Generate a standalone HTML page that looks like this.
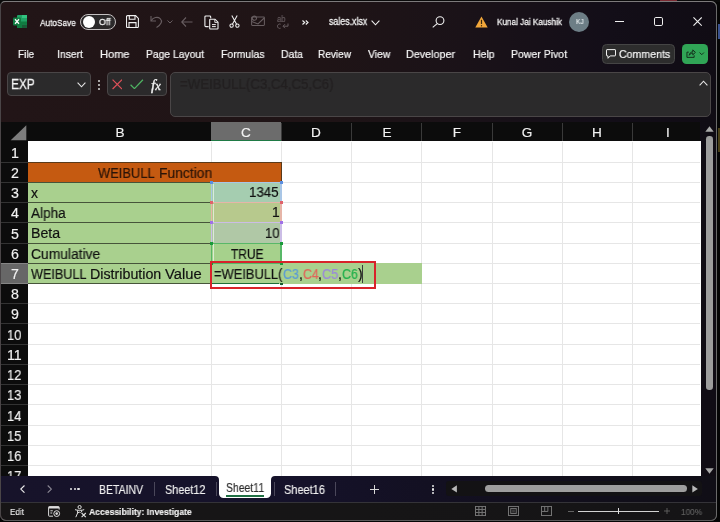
<!DOCTYPE html>
<html lang="en">
<head>
<meta charset="utf-8">
<title>sales.xlsx - Excel</title>
<style>
*{box-sizing:border-box;margin:0;padding:0}
html,body{width:720px;height:522px;overflow:hidden;background:#050505}
body{font-family:"Liberation Sans",sans-serif;color:#fff;position:relative}
.abs,.t{position:absolute}
.t{white-space:nowrap;line-height:1;transform-origin:0 50%;will-change:transform;-webkit-text-stroke-width:0.15px}
#win{position:absolute;left:0;top:1px;width:717.2px;height:519.6px;border-radius:5px 6px 6px 6px;overflow:hidden;
 background:linear-gradient(90deg,#221517 0%,#1f1416 45%,#1a1218 65%,#130e18 85%,#100c14 100%);border:1px solid #555}
.box{position:absolute;background:#2b2a2b;border:1px solid #4a4647;border-radius:4px}
</style>
</head>
<body>

<div class="abs" style="left:0;top:0;width:720px;height:2px;background:#0a0a0a"></div>
<div class="abs" style="left:660px;top:0;width:17px;height:1.3px;background:#7a2a32"></div>
<div class="abs" style="left:718px;top:24px;width:2px;height:15px;background:#3a5290"></div>
<div class="abs" style="left:718px;top:128px;width:2px;height:24px;background:#4a4018"></div>
<div id="win"></div>

<svg class="abs" style="left:13px;top:15px" width="14" height="13" viewBox="0 0 28 26">
  <rect x="8" y="0" width="20" height="26" rx="2" fill="#21a366"/>
  <rect x="18" y="0" width="10" height="6.5" fill="#33c481"/>
  <rect x="18" y="6.5" width="10" height="6.5" fill="#21a366"/>
  <rect x="18" y="13" width="10" height="6.5" fill="#107c41"/>
  <rect x="18" y="19.5" width="10" height="6.5" fill="#185c37"/>
  <rect x="8" y="13" width="10" height="13" fill="#107c41"/>
  <rect x="0" y="5" width="16" height="16" rx="2" fill="#107c41"/>
  <path d="M4 8.5 L12 17.5 M12 8.5 L4 17.5" stroke="#fff" stroke-width="2.4"/>
</svg>
<div class="t" style="left:39.50px;top:17.70px;font-size:9.40px;color:#f4f4f4;-webkit-text-stroke-width:0.28px;transform:scaleX(0.8806);">AutoSave</div>
<div class="abs" style="left:80.2px;top:13.7px;width:36px;height:16.4px;border:1.2px solid #c4c0c1;border-radius:8.2px;background:#2b292a"></div>
<div class="abs" style="left:82.8px;top:15.8px;width:12.2px;height:12.2px;border-radius:6.1px;background:#fff"></div>
<div class="t" style="left:99.00px;top:17.70px;font-size:9.20px;color:#f4f4f4;-webkit-text-stroke-width:0.28px;transform:scaleX(0.9509);">Off</div>
<svg class="abs" style="left:126px;top:15px" width="13" height="13" viewBox="0 0 13 13" fill="none" stroke="#f0f0f0" stroke-width="1.1">
  <path d="M1.5 0.6 H9.6 L12.4 3.4 V11.5 a1 1 0 0 1 -1 1 H1.5 a1 1 0 0 1 -1 -1 V1.6 a1 1 0 0 1 1 -1 Z"/>
  <path d="M3.3 0.8 V4.3 H9 V0.8"/>
  <path d="M3 12.3 V7.6 H10 V12.3"/>
</svg>
<!-- undo (dim) -->
<svg class="abs" style="left:150px;top:15px" width="13" height="13" viewBox="0 0 13 13" fill="none" stroke="#675d60" stroke-width="1.1">
  <path d="M1 1 V6 H6"/>
  <path d="M1.2 5.8 C3 2.5 7.5 1.2 10.2 3.6 C12.8 6 11.5 9.5 6.5 12.5"/>
</svg>
<svg class="abs" style="left:167px;top:20px" width="6" height="4" viewBox="0 0 6 4" fill="none" stroke="#675d60" stroke-width="1"><path d="M0.5 0.5 L3 3 L5.5 0.5"/></svg>
<!-- left arrow dim -->
<svg class="abs" style="left:181px;top:17px" width="12" height="10" viewBox="0 0 12 10" fill="none" stroke="#675d60" stroke-width="1.1"><path d="M5 0.5 L0.7 5 L5 9.5 M0.7 5 H11.5"/></svg>
<!-- paste -->
<svg class="abs" style="left:204px;top:14.5px" width="15" height="15" viewBox="0 0 15 15" fill="none" stroke="#f0f0f0" stroke-width="1.1">
  <path d="M4.6 11.6 H1.8 a0.9 0.9 0 0 1 -0.9 -0.9 V1.9 a0.9 0.9 0 0 1 0.9 -0.9 H5.8 a0.9 0.9 0 0 1 0.9 0.9 V3.2"/>
  <path d="M6.3 4.2 H11 L14 7.2 V13.4 a0.6 0.6 0 0 1 -0.6 0.6 H6.3 a0.6 0.6 0 0 1 -0.6 -0.6 V4.8 a0.6 0.6 0 0 1 0.6 -0.6 Z" fill="#1f1416"/>
  <path d="M10.8 4.4 V7.4 H13.8" stroke-width="0.9"/>
  <path d="M8 9.6 H11.8 M8 11.6 H11.8" stroke-width="1"/>
</svg>
<!-- scissors -->
<svg class="abs" style="left:228.5px;top:15px" width="11" height="13" viewBox="0 0 11 13" fill="none" stroke="#f0f0f0" stroke-width="1.05">
  <path d="M2.8 0.5 L7.6 9.3 M8.2 0.5 L3.4 9.3"/>
  <circle cx="2.6" cy="10.6" r="1.7"/><circle cx="8.4" cy="10.6" r="1.7"/>
</svg>
<!-- mail dim -->
<svg class="abs" style="left:251px;top:15px" width="14" height="11" viewBox="0 0 14 11" fill="none" stroke="#675d60" stroke-width="1.05">
  <rect x="0.6" y="2" width="12.8" height="8.4" rx="0.8"/>
  <path d="M0.8 6.5 L7 9 L13.2 3"/>
  <circle cx="3.4" cy="3.2" r="2.1"/>
</svg>
<!-- abc dim -->
<div class="t" style="left:276.70px;top:14.70px;font-size:8.60px;color:#675d60;transform:scaleX(0.8993);">ab</div>
<svg class="abs" style="left:277px;top:22.5px" width="12" height="7" viewBox="0 0 12 7" fill="none" stroke="#675d60" stroke-width="1"><path d="M3.6 1.2 A2.2 2.2 0 1 0 3.6 5.2"/><path d="M11 0.5 V3.2 H6.2 M8 1.2 L6 3.2 L8 5.2"/></svg>
<svg class="abs" style="left:302px;top:20.3px" width="7" height="5" viewBox="0 0 7 5" fill="none" stroke="#f0f0f0" stroke-width="1.15"><path d="M0.5 0.5 L2.7 2.5 L0.5 4.5 M3.8 0.5 L6 2.5 L3.8 4.5"/></svg>
<div class="t" style="left:329.00px;top:17.30px;font-size:10.20px;color:#f4f4f4;-webkit-text-stroke-width:0.28px;transform:scaleX(0.8671);">sales.xlsx</div>
<svg class="abs" style="left:371px;top:19.5px" width="9" height="6" viewBox="0 0 9 6" fill="none" stroke="#f0f0f0" stroke-width="1.1"><path d="M0.6 0.7 L4.5 4.8 L8.4 0.7"/></svg>
<!-- search -->
<svg class="abs" style="left:432px;top:16px" width="13" height="12" viewBox="0 0 13 12" fill="none" stroke="#f0f0f0" stroke-width="1.1"><circle cx="8" cy="4.6" r="3.9"/><path d="M5.2 7.6 L0.7 11.4"/></svg>
<!-- warning -->
<svg class="abs" style="left:475px;top:15.5px" width="13" height="12" viewBox="0 0 13 12"><path d="M6.5 0.4 L12.7 11.6 H0.3 Z" fill="#f2a73a"/><path d="M6.5 3.8 V8" stroke="#3a2a10" stroke-width="1.2"/><circle cx="6.5" cy="9.7" r="0.7" fill="#3a2a10"/></svg>
<div class="t" style="left:497.00px;top:17.75px;font-size:9.30px;color:#f4f4f4;-webkit-text-stroke-width:0.28px;transform:scaleX(0.8795);">Kunal Jai Kaushik</div>
<div class="abs" style="left:569px;top:12px;width:20px;height:20px;border-radius:10px;background:#6d7e86"></div>
<div class="t" style="left:575.80px;top:18.40px;font-size:7.80px;color:#e4eaec;transform:scaleX(0.8343);">KJ</div>
<div class="abs" style="left:614.5px;top:21px;width:9px;height:1px;background:#f0f0f0"></div>
<div class="abs" style="left:653.8px;top:17.2px;width:9.2px;height:9px;border:1.1px solid #f0f0f0;border-radius:1.8px"></div>
<svg class="abs" style="left:693px;top:17.4px" width="9.2" height="9.2" viewBox="0 0 10 10" stroke="#f0f0f0" stroke-width="1.2"><path d="M0.5 0.5 L9.5 9.5 M9.5 0.5 L0.5 9.5"/></svg>
<div class="t" style="left:18.00px;top:49.15px;font-size:11.30px;color:#f6f6f6;-webkit-text-stroke-width:0.22px;transform:scaleX(0.8790);">File</div><div class="t" style="left:56.50px;top:49.15px;font-size:11.30px;color:#f6f6f6;-webkit-text-stroke-width:0.22px;transform:scaleX(0.9198);">Insert</div><div class="t" style="left:99.50px;top:49.15px;font-size:11.30px;color:#f6f6f6;-webkit-text-stroke-width:0.22px;transform:scaleX(0.9787);">Home</div><div class="t" style="left:146.00px;top:49.15px;font-size:11.30px;color:#f6f6f6;-webkit-text-stroke-width:0.22px;transform:scaleX(0.9141);">Page Layout</div><div class="t" style="left:221.00px;top:49.15px;font-size:11.30px;color:#f6f6f6;-webkit-text-stroke-width:0.22px;transform:scaleX(0.9237);">Formulas</div><div class="t" style="left:280.50px;top:49.15px;font-size:11.30px;color:#f6f6f6;-webkit-text-stroke-width:0.22px;transform:scaleX(0.9215);">Data</div><div class="t" style="left:318.00px;top:49.15px;font-size:11.30px;color:#f6f6f6;-webkit-text-stroke-width:0.22px;transform:scaleX(0.8908);">Review</div><div class="t" style="left:367.50px;top:49.15px;font-size:11.30px;color:#f6f6f6;-webkit-text-stroke-width:0.22px;transform:scaleX(0.9260);">View</div><div class="t" style="left:406.00px;top:49.15px;font-size:11.30px;color:#f6f6f6;-webkit-text-stroke-width:0.22px;transform:scaleX(0.9515);">Developer</div><div class="t" style="left:472.50px;top:49.15px;font-size:11.30px;color:#f6f6f6;-webkit-text-stroke-width:0.22px;transform:scaleX(0.9254);">Help</div><div class="t" style="left:511.00px;top:49.15px;font-size:11.30px;color:#f6f6f6;-webkit-text-stroke-width:0.22px;transform:scaleX(0.9290);">Power Pivot</div>
<div class="abs" style="left:602px;top:44px;width:73px;height:19.5px;background:#2d2d2d;border:1px solid #454545;border-radius:4.5px"></div>
<svg class="abs" style="left:606px;top:48.5px" width="10" height="10" viewBox="0 0 10 10" fill="none" stroke="#f0f0f0" stroke-width="1"><path d="M1 0.6 H9 a0.5 0.5 0 0 1 .5 .5 V6.4 a0.5 0.5 0 0 1 -.5 .5 H4.2 L2 9.3 V6.9 H1 a0.5 0.5 0 0 1 -.5 -.5 V1.1 a0.5 0.5 0 0 1 .5 -.5 Z"/></svg>
<div class="t" style="left:619.30px;top:48.70px;font-size:11.20px;color:#f6f6f6;-webkit-text-stroke-width:0.22px;transform:scaleX(0.9465);">Comments</div>
<div class="abs" style="left:682px;top:44px;width:25.5px;height:19.5px;background:#30a556;border-radius:4.5px"></div>
<svg class="abs" style="left:685.5px;top:49.3px" width="10" height="9" viewBox="0 0 11 10" fill="none" stroke="#14301c" stroke-width="1.1"><path d="M3 3.5 H1 V9.3 H9 V7"/><path d="M3.5 7 C3.8 4.5 5.5 3.2 7.5 3.2 V1 L10.4 3.8 L7.5 6.5 V4.5 C6 4.5 4.6 5.2 3.5 7 Z"/></svg>
<svg class="abs" style="left:699px;top:52.2px" width="5.5" height="3.6" viewBox="0 0 6 4" fill="none" stroke="#14301c" stroke-width="1.1"><path d="M0.6 0.6 L3 3 L5.4 0.6"/></svg>

<div class="box" style="left:7px;top:72.2px;width:84px;height:23.8px"></div>
<div class="t" style="left:10.60px;top:78.00px;font-size:13.80px;color:#f4f4f4;-webkit-text-stroke-width:0.3px;transform:scaleX(0.8584);">EXP</div>
<svg class="abs" style="left:76.5px;top:81.5px" width="9" height="6" viewBox="0 0 9 6" fill="none" stroke="#e6e6e6" stroke-width="1.1"><path d="M0.6 0.7 L4.5 4.8 L8.4 0.7"/></svg>
<div class="abs" style="left:97.5px;top:79.5px;width:2px;height:2px;border-radius:1px;background:#d8d8d8"></div>
<div class="abs" style="left:97.5px;top:83.5px;width:2px;height:2px;border-radius:1px;background:#d8d8d8"></div>
<div class="abs" style="left:97.5px;top:87.5px;width:2px;height:2px;border-radius:1px;background:#d8d8d8"></div>
<div class="box" style="left:106.5px;top:72.2px;width:60.5px;height:23.8px"></div>
<svg class="abs" style="left:111.8px;top:79px" width="10.6" height="10.6" viewBox="0 0 11 11" stroke="#dd5058" stroke-width="1.25"><path d="M0.6 0.6 L10.4 10.4 M10.4 0.6 L0.6 10.4"/></svg>
<svg class="abs" style="left:130px;top:78.6px" width="13.5" height="10.6" viewBox="0 0 14 11" fill="none" stroke="#4fb463" stroke-width="1.25"><path d="M0.6 6 L4.6 10 L13.4 0.8"/></svg>
<div class="t" style="left:151.20px;top:76.85px;font-size:15.50px;color:#efefef;font-family:'Liberation Serif',serif;font-style:italic;-webkit-text-stroke-width:0.35px;">f<span style="font-size:12.5px">x</span></div>
<div class="box" style="left:170px;top:72px;width:540.6px;height:44.8px;border-radius:5px"></div>
<div class="t" style="left:180.00px;top:77.25px;font-size:14.50px;color:#232021;transform:scaleX(0.9136);">=WEIBULL(C3,C4,C5,C6)</div>
<svg class="abs" style="left:698.5px;top:80.3px" width="9" height="6" viewBox="0 0 9 6" fill="none" stroke="#e6e6e6" stroke-width="1.1"><path d="M0.6 5.3 L4.5 1.2 L8.4 5.3"/></svg>
<div class="abs" style="left:1px;top:141px;width:699.6px;height:334.6px;background:#fff"></div>
<div class="abs" style="left:1px;top:121.8px;width:699.4px;height:19.5px;background:#0c0c0c"></div>
<div class="abs" style="left:1px;top:121.8px;width:27.2px;height:354.2px;background:#0c0c0c"></div>
<svg class="abs" style="left:10px;top:124.5px" width="17" height="16" viewBox="0 0 17 16"><path d="M16.3 0.3 V15.3 H0.7 Z" fill="#7d7d7d"/></svg>
<div class="abs" style="left:210.5px;top:141.7px;width:1px;height:334.3px;background:#e6e6e6"></div>
<div class="abs" style="left:280.8px;top:141.7px;width:1px;height:334.3px;background:#e6e6e6"></div>
<div class="abs" style="left:351.0px;top:141.7px;width:1px;height:334.3px;background:#e6e6e6"></div>
<div class="abs" style="left:421.2px;top:141.7px;width:1px;height:334.3px;background:#e6e6e6"></div>
<div class="abs" style="left:491.5px;top:141.7px;width:1px;height:334.3px;background:#e6e6e6"></div>
<div class="abs" style="left:561.7px;top:141.7px;width:1px;height:334.3px;background:#e6e6e6"></div>
<div class="abs" style="left:631.9px;top:141.7px;width:1px;height:334.3px;background:#e6e6e6"></div>
<div class="abs" style="left:28.2px;top:161.72px;width:672px;height:1px;background:#e6e6e6"></div>
<div class="abs" style="left:28.2px;top:181.94px;width:672px;height:1px;background:#e6e6e6"></div>
<div class="abs" style="left:28.2px;top:202.16px;width:672px;height:1px;background:#e6e6e6"></div>
<div class="abs" style="left:28.2px;top:222.38px;width:672px;height:1px;background:#e6e6e6"></div>
<div class="abs" style="left:28.2px;top:242.60px;width:672px;height:1px;background:#e6e6e6"></div>
<div class="abs" style="left:28.2px;top:262.82px;width:672px;height:1px;background:#e6e6e6"></div>
<div class="abs" style="left:28.2px;top:283.04px;width:672px;height:1px;background:#e6e6e6"></div>
<div class="abs" style="left:28.2px;top:303.26px;width:672px;height:1px;background:#e6e6e6"></div>
<div class="abs" style="left:28.2px;top:323.48px;width:672px;height:1px;background:#e6e6e6"></div>
<div class="abs" style="left:28.2px;top:343.70px;width:672px;height:1px;background:#e6e6e6"></div>
<div class="abs" style="left:28.2px;top:363.92px;width:672px;height:1px;background:#e6e6e6"></div>
<div class="abs" style="left:28.2px;top:384.14px;width:672px;height:1px;background:#e6e6e6"></div>
<div class="abs" style="left:28.2px;top:404.36px;width:672px;height:1px;background:#e6e6e6"></div>
<div class="abs" style="left:28.2px;top:424.58px;width:672px;height:1px;background:#e6e6e6"></div>
<div class="abs" style="left:28.2px;top:444.80px;width:672px;height:1px;background:#e6e6e6"></div>
<div class="abs" style="left:28.2px;top:465.02px;width:672px;height:1px;background:#e6e6e6"></div>
<div class="abs" style="left:210.5px;top:122.5px;width:1px;height:18.5px;background:#3a3a3a"></div>
<div class="t" style="left:109.60px;top:125.50px;font-size:13.60px;color:#f2f2f2;width:20px;text-align:center;">B</div><div class="abs" style="left:211.0px;top:121.8px;width:70.3px;height:19.5px;background:#6c6c6c;border-bottom:1.3px solid #1f7a45"></div>
<div class="abs" style="left:280.8px;top:122.5px;width:1px;height:18.5px;background:#3a3a3a"></div>
<div class="t" style="left:236.15px;top:125.50px;font-size:13.60px;color:#f2f2f2;width:20px;text-align:center;">C</div><div class="abs" style="left:351.0px;top:122.5px;width:1px;height:18.5px;background:#3a3a3a"></div>
<div class="t" style="left:306.40px;top:125.50px;font-size:13.60px;color:#f2f2f2;width:20px;text-align:center;">D</div><div class="abs" style="left:421.2px;top:122.5px;width:1px;height:18.5px;background:#3a3a3a"></div>
<div class="t" style="left:376.60px;top:125.50px;font-size:13.60px;color:#f2f2f2;width:20px;text-align:center;">E</div><div class="abs" style="left:491.5px;top:122.5px;width:1px;height:18.5px;background:#3a3a3a"></div>
<div class="t" style="left:446.85px;top:125.50px;font-size:13.60px;color:#f2f2f2;width:20px;text-align:center;">F</div><div class="abs" style="left:561.7px;top:122.5px;width:1px;height:18.5px;background:#3a3a3a"></div>
<div class="t" style="left:517.10px;top:125.50px;font-size:13.60px;color:#f2f2f2;width:20px;text-align:center;">G</div><div class="abs" style="left:631.9px;top:122.5px;width:1px;height:18.5px;background:#3a3a3a"></div>
<div class="t" style="left:587.30px;top:125.50px;font-size:13.60px;color:#f2f2f2;width:20px;text-align:center;">H</div><div class="t" style="left:657.50px;top:125.50px;font-size:13.60px;color:#f2f2f2;width:20px;text-align:center;">I</div><div class="abs" style="left:1px;top:161.72px;width:27.2px;height:1px;background:#333"></div>
<div class="t" style="left:2.50px;top:145.68px;font-size:14.20px;color:#f2f2f2;width:24px;text-align:center;">1</div><div class="abs" style="left:1px;top:181.94px;width:27.2px;height:1px;background:#333"></div>
<div class="t" style="left:2.50px;top:165.90px;font-size:14.20px;color:#f2f2f2;width:24px;text-align:center;">2</div><div class="abs" style="left:1px;top:202.16px;width:27.2px;height:1px;background:#333"></div>
<div class="t" style="left:2.50px;top:186.12px;font-size:14.20px;color:#f2f2f2;width:24px;text-align:center;">3</div><div class="abs" style="left:1px;top:222.38px;width:27.2px;height:1px;background:#333"></div>
<div class="t" style="left:2.50px;top:206.34px;font-size:14.20px;color:#f2f2f2;width:24px;text-align:center;">4</div><div class="abs" style="left:1px;top:242.60px;width:27.2px;height:1px;background:#333"></div>
<div class="t" style="left:2.50px;top:226.56px;font-size:14.20px;color:#f2f2f2;width:24px;text-align:center;">5</div><div class="t" style="left:2.50px;top:246.78px;font-size:14.20px;color:#f2f2f2;width:24px;text-align:center;">6</div><div class="abs" style="left:1px;top:263.32px;width:27.2px;height:20.22px;background:#676767;border-top:1px solid #858585;border-bottom:1px solid #858585"></div>
<div class="t" style="left:2.50px;top:267.00px;font-size:14.20px;color:#f2f2f2;width:24px;text-align:center;">7</div><div class="abs" style="left:1px;top:303.26px;width:27.2px;height:1px;background:#333"></div>
<div class="t" style="left:2.50px;top:287.22px;font-size:14.20px;color:#f2f2f2;width:24px;text-align:center;">8</div><div class="abs" style="left:1px;top:323.48px;width:27.2px;height:1px;background:#333"></div>
<div class="t" style="left:2.50px;top:307.44px;font-size:14.20px;color:#f2f2f2;width:24px;text-align:center;">9</div><div class="abs" style="left:1px;top:343.70px;width:27.2px;height:1px;background:#333"></div>
<div class="t" style="left:7.30px;top:327.66px;font-size:14.20px;color:#f2f2f2;transform:scaleX(0.9061);">10</div><div class="abs" style="left:1px;top:363.92px;width:27.2px;height:1px;background:#333"></div>
<div class="t" style="left:7.30px;top:347.88px;font-size:14.20px;color:#f2f2f2;transform:scaleX(0.9705);">11</div><div class="abs" style="left:1px;top:384.14px;width:27.2px;height:1px;background:#333"></div>
<div class="t" style="left:7.30px;top:368.10px;font-size:14.20px;color:#f2f2f2;transform:scaleX(0.9061);">12</div><div class="abs" style="left:1px;top:404.36px;width:27.2px;height:1px;background:#333"></div>
<div class="t" style="left:7.30px;top:388.32px;font-size:14.20px;color:#f2f2f2;transform:scaleX(0.9061);">13</div><div class="abs" style="left:1px;top:424.58px;width:27.2px;height:1px;background:#333"></div>
<div class="t" style="left:7.30px;top:408.54px;font-size:14.20px;color:#f2f2f2;transform:scaleX(0.9061);">14</div><div class="abs" style="left:1px;top:444.80px;width:27.2px;height:1px;background:#333"></div>
<div class="t" style="left:7.30px;top:428.76px;font-size:14.20px;color:#f2f2f2;transform:scaleX(0.9061);">15</div><div class="abs" style="left:1px;top:465.02px;width:27.2px;height:1px;background:#333"></div>
<div class="t" style="left:7.30px;top:448.98px;font-size:14.20px;color:#f2f2f2;transform:scaleX(0.9061);">16</div><div class="abs" style="left:1px;top:485.24px;width:27.2px;height:1px;background:#333"></div>
<div class="t" style="left:7.30px;top:469.20px;font-size:14.20px;color:#f2f2f2;transform:scaleX(0.9061);">17</div><div class="abs" style="left:28.2px;top:162.22px;width:253.3px;height:20.22px;background:#c55a11"></div>
<div class="abs" style="left:28.2px;top:182.44px;width:253.3px;height:80.88px;background:#a9d08e"></div>
<div class="abs" style="left:28.2px;top:263.32px;width:393.5px;height:20.22px;background:#a9d08e"></div>
<div class="abs" style="left:28.2px;top:181.94px;width:253.3px;height:1px;background:#46543a"></div>
<div class="abs" style="left:28.2px;top:202.16px;width:182.8px;height:1px;background:#46543a"></div>
<div class="abs" style="left:28.2px;top:222.38px;width:182.8px;height:1px;background:#46543a"></div>
<div class="abs" style="left:28.2px;top:242.60px;width:182.8px;height:1px;background:#46543a"></div>
<div class="abs" style="left:28.2px;top:262.82px;width:182.8px;height:1px;background:#46543a"></div>
<div class="abs" style="left:28.2px;top:283.04px;width:182.8px;height:1px;background:#46543a"></div>
<div class="abs" style="left:28.2px;top:161.72px;width:253.3px;height:1px;background:#5a3a1a"></div>
<div class="abs" style="left:280.9px;top:162.22px;width:1px;height:20.22px;background:#5a3a1a"></div>
<div class="abs" style="left:210.5px;top:182.44px;width:1px;height:101.10px;background:#46543a"></div>
<div class="abs" style="left:211.2px;top:181.84px;width:71.1px;height:20.82px;background:#a5cdb0;border:1.4px solid #a9c6e6;border-left-width:1px;border-right-width:2px;border-bottom-width:0"></div>
<div class="abs" style="left:212.6px;top:183.64px;width:1px;height:18.22px;background:rgba(235,245,235,0.75)"></div>
<div class="abs" style="left:211.2px;top:202.06px;width:71.1px;height:20.82px;background:#b7c98d;border:1.4px solid #e6b5a8;border-left-width:1px;border-right-width:2px;border-bottom-width:0"></div>
<div class="abs" style="left:212.6px;top:203.86px;width:1px;height:18.22px;background:rgba(235,245,235,0.75)"></div>
<div class="abs" style="left:211.2px;top:222.28px;width:71.1px;height:20.82px;background:#b0c8a6;border:1.4px solid #cbbde6;border-left-width:1px;border-right-width:2px;border-bottom-width:0"></div>
<div class="abs" style="left:212.6px;top:224.08px;width:1px;height:18.22px;background:rgba(235,245,235,0.75)"></div>
<div class="abs" style="left:211.2px;top:242.50px;width:71.1px;height:20.82px;background:#a6d18c;border:1.4px solid #58b868;border-left-width:1px;border-right-width:2px;border-bottom-width:0"></div>
<div class="abs" style="left:212.6px;top:244.30px;width:1px;height:18.22px;background:rgba(235,245,235,0.75)"></div>
<div class="abs" style="left:210.2px;top:180.94px;width:3px;height:3px;background:#5b8fe0"></div>
<div class="abs" style="left:279.9px;top:180.94px;width:3px;height:3px;background:#5b8fe0"></div>
<div class="abs" style="left:210.2px;top:201.16px;width:3px;height:3px;background:#e0626a"></div>
<div class="abs" style="left:279.9px;top:201.16px;width:3px;height:3px;background:#e0626a"></div>
<div class="abs" style="left:210.2px;top:221.38px;width:3px;height:3px;background:#a070e8"></div>
<div class="abs" style="left:279.9px;top:221.38px;width:3px;height:3px;background:#a070e8"></div>
<div class="abs" style="left:210.2px;top:241.60px;width:3px;height:3px;background:#1a9a3a"></div>
<div class="abs" style="left:279.9px;top:241.60px;width:3px;height:3px;background:#1a9a3a"></div>
<div class="abs" style="left:211.2px;top:262.62px;width:71.1px;height:1.4px;background:#58b868"></div>
<div class="abs" style="left:210.2px;top:261.82px;width:3px;height:3px;background:#1a9a3a"></div>
<div class="abs" style="left:279.9px;top:261.82px;width:3px;height:3px;background:#1a9a3a"></div>
<div class="t" style="left:98.20px;top:165.77px;font-size:14.00px;color:#2a1408;-webkit-text-stroke-width:0.18px;transform:scaleX(0.9208);">WEIBULL</div><div class="t" style="left:158.80px;top:165.77px;font-size:14.00px;color:#2a1408;-webkit-text-stroke-width:0.18px;transform:scaleX(0.9906);">Function</div><div class="t" style="left:31.30px;top:185.99px;font-size:14.00px;color:#111;-webkit-text-stroke-width:0.18px;">x</div><div class="t" style="left:31.30px;top:206.21px;font-size:14.00px;color:#111;-webkit-text-stroke-width:0.18px;transform:scaleX(0.9689);">Alpha</div><div class="t" style="left:31.30px;top:226.43px;font-size:14.00px;color:#111;-webkit-text-stroke-width:0.18px;transform:scaleX(1.0134);">Beta</div><div class="t" style="left:31.30px;top:246.65px;font-size:14.00px;color:#111;-webkit-text-stroke-width:0.18px;transform:scaleX(0.9881);">Cumulative</div><div class="t" style="left:31.20px;top:266.87px;font-size:14.00px;color:#111;-webkit-text-stroke-width:0.18px;transform:scaleX(0.9013);">WEIBULL</div><div class="t" style="left:90.00px;top:266.87px;font-size:14.00px;color:#111;-webkit-text-stroke-width:0.18px;transform:scaleX(1.0181);">Distribution</div><div class="t" style="left:165.40px;top:266.87px;font-size:14.00px;color:#111;-webkit-text-stroke-width:0.18px;transform:scaleX(1.0523);">Value</div><div class="t" style="left:249.40px;top:186.16px;font-size:13.80px;color:#111;-webkit-text-stroke-width:0.18px;transform:scaleX(0.9641);">1345</div><div class="t" style="left:271.90px;top:206.38px;font-size:13.80px;color:#111;-webkit-text-stroke-width:0.18px;">1</div><div class="t" style="left:264.50px;top:226.60px;font-size:13.80px;color:#111;-webkit-text-stroke-width:0.18px;transform:scaleX(0.9440);">10</div><div class="t" style="left:230.50px;top:246.65px;font-size:14.00px;color:#111;-webkit-text-stroke-width:0.18px;transform:scaleX(0.8525);">TRUE</div><div class="t" style="left:214.20px;top:266.87px;font-size:14.00px;color:#111;-webkit-text-stroke-width:0.18px;transform:scaleX(0.9204);">=WEIBULL(</div><div class="t" style="left:282.60px;top:266.87px;font-size:14.00px;color:#5b9bd5;-webkit-text-stroke-width:0.18px;transform:scaleX(0.8935);">C3</div><div class="t" style="left:298.60px;top:266.87px;font-size:14.00px;color:#111;-webkit-text-stroke-width:0.18px;">,</div><div class="t" style="left:302.60px;top:266.87px;font-size:14.00px;color:#e0665a;-webkit-text-stroke-width:0.18px;transform:scaleX(0.8880);">C4</div><div class="t" style="left:318.40px;top:266.87px;font-size:14.00px;color:#111;-webkit-text-stroke-width:0.18px;">,</div><div class="t" style="left:321.60px;top:266.87px;font-size:14.00px;color:#9a8ad8;-webkit-text-stroke-width:0.18px;transform:scaleX(0.9159);">C5</div><div class="t" style="left:337.80px;top:266.87px;font-size:14.00px;color:#111;-webkit-text-stroke-width:0.18px;">,</div><div class="t" style="left:341.80px;top:266.87px;font-size:14.00px;color:#22b04c;-webkit-text-stroke-width:0.18px;transform:scaleX(0.8935);">C6</div><div class="t" style="left:357.80px;top:266.87px;font-size:14.00px;color:#111;-webkit-text-stroke-width:0.18px;">)</div><div class="abs" style="left:362.2px;top:264.52px;width:1px;height:18px;background:#3a3a3a"></div>
<div class="abs" style="left:211px;top:282.82px;width:68px;height:1.2px;background:#1e6e38"></div>
<div class="abs" style="left:279.8px;top:282.62px;width:3px;height:2.2px;background:#1a5c30"></div>
<div class="abs" style="left:210px;top:261px;width:165.5px;height:28.2px;border:2.6px solid #d8232a"></div>

<svg class="abs" style="left:704.5px;top:126px" width="9" height="6" viewBox="0 0 9 6"><path d="M4.5 0.3 L8.7 5.7 H0.3 Z" fill="#a9a9a9"/></svg>
<div class="abs" style="left:706px;top:136px;width:6.5px;height:254px;border-radius:3.2px;background:#9d9d9d"></div>
<svg class="abs" style="left:704.5px;top:467.5px" width="9" height="6" viewBox="0 0 9 6"><path d="M4.5 5.7 L8.7 0.3 H0.3 Z" fill="#a9a9a9"/></svg>

<div class="abs" style="left:1px;top:476px;width:715.6px;height:26px;background:linear-gradient(90deg,#17132a 0%,#15122a 40%,#120f1e 70%,#100e16 100%)"></div>
<div class="abs" style="left:445.5px;top:480.5px;width:256px;height:15.2px;border-radius:3px;background:#131214"></div>
<svg class="abs" style="left:19.6px;top:484.7px" width="5.2" height="8.2" viewBox="0 0 6 10" fill="none" stroke="#ececec" stroke-width="1.35"><path d="M5.3 0.6 L0.8 5 L5.3 9.4"/></svg>
<svg class="abs" style="left:46.5px;top:484.7px" width="5.2" height="8.2" viewBox="0 0 6 10" fill="none" stroke="#8b8894" stroke-width="1.35"><path d="M0.7 0.6 L5.2 5 L0.7 9.4"/></svg>
<div class="abs" style="left:70px;top:488px;width:2.4px;height:2.4px;border-radius:1.2px;background:#e8e8e8"></div>
<div class="abs" style="left:73.7px;top:488px;width:2.4px;height:2.4px;border-radius:1.2px;background:#e8e8e8"></div>
<div class="abs" style="left:77.4px;top:488px;width:2.4px;height:2.4px;border-radius:1.2px;background:#e8e8e8"></div>
<div class="t" style="left:99.00px;top:484.00px;font-size:12.00px;color:#f2f2f2;transform:scaleX(0.8718);">BETAINV</div><div class="t" style="left:165.00px;top:484.00px;font-size:12.00px;color:#f2f2f2;transform:scaleX(0.9057);">Sheet12</div><div class="t" style="left:284.00px;top:484.00px;font-size:12.00px;color:#f2f2f2;transform:scaleX(0.9168);">Sheet16</div><div class="abs" style="left:154.0px;top:482px;width:1px;height:14px;background:#4a475a"></div>
<div class="abs" style="left:215.5px;top:482px;width:1px;height:14px;background:#4a475a"></div>
<div class="abs" style="left:274.0px;top:482px;width:1px;height:14px;background:#4a475a"></div>
<div class="abs" style="left:334.5px;top:482px;width:1px;height:14px;background:#4a475a"></div>

<div class="abs" style="left:218.5px;top:476px;width:52.5px;height:22.3px;background:#fff;border-radius:0 0 4.5px 4.5px"></div>
<svg class="abs" style="left:214.5px;top:476px" width="4" height="4" viewBox="0 0 4 4"><path d="M0 0 H4 V4 A4 4 0 0 0 0 0 Z" fill="#fff"/></svg>
<svg class="abs" style="left:271px;top:476px" width="4" height="4" viewBox="0 0 4 4"><path d="M4 0 H0 V4 A4 4 0 0 1 4 0 Z" fill="#fff"/></svg>
<div class="abs" style="left:225.5px;top:495.1px;width:38.5px;height:1.9px;background:#1f7043"></div>
<div class="t" style="left:225.70px;top:481.50px;font-size:12.00px;color:#2b2b2b;transform:scaleX(0.8693);">Sheet11</div>
<svg class="abs" style="left:370px;top:484.5px" width="9" height="9" viewBox="0 0 9 9" stroke="#d8d8d8" stroke-width="1"><path d="M4.5 0 V9 M0 4.5 H9"/></svg>
<div class="abs" style="left:432px;top:484.5px;width:2.4px;height:2.4px;border-radius:1.2px;background:#e8e8e8"></div>
<div class="abs" style="left:432px;top:488.2px;width:2.4px;height:2.4px;border-radius:1.2px;background:#e8e8e8"></div>
<div class="abs" style="left:432px;top:491.9px;width:2.4px;height:2.4px;border-radius:1.2px;background:#e8e8e8"></div>
<svg class="abs" style="left:450.8px;top:484.8px" width="6.2" height="7.8" viewBox="0 0 7 9"><path d="M0.3 4.5 L6.7 0.3 V8.7 Z" fill="#b8b8b8"/></svg>
<div class="abs" style="left:484.8px;top:485.1px;width:202.5px;height:7.4px;border-radius:3.7px;background:#9e9e9e"></div>
<svg class="abs" style="left:691.6px;top:484.8px" width="6.2" height="7.8" viewBox="0 0 7 9"><path d="M6.7 4.5 L0.3 0.3 V8.7 Z" fill="#b8b8b8"/></svg>

<div class="abs" style="left:1px;top:502px;width:715.6px;height:18px;background:linear-gradient(90deg,#171516 0%,#161516 50%,#151416 100%);border-top:1px solid #343338;border-radius:0 0 6px 6px"></div>
<div class="t" style="left:10.00px;top:507.30px;font-size:9.40px;color:#e8e8e8;transform:scaleX(0.8665);">Edit</div>
<svg class="abs" style="left:48px;top:506.3px" width="13" height="12" viewBox="0 0 13 12" fill="none" stroke="#dcdcdc" stroke-width="1"><path d="M5 10.2 H1.2 a0.6 0.6 0 0 1 -0.6 -0.6 V1.2 a0.6 0.6 0 0 1 0.6 -0.6 H10.6 a0.6 0.6 0 0 1 0.6 0.6 V3.6"/><path d="M0.8 1.6 H11" stroke-width="1.8"/><path d="M2.4 4.8 H4.8 M2.4 7 H4.2"/><circle cx="8.7" cy="7.6" r="2.9"/><circle cx="8.7" cy="7.6" r="1.3" fill="#dcdcdc" stroke="none"/></svg>
<svg class="abs" style="left:73.5px;top:505.3px" width="13" height="13" viewBox="0 0 13 13" fill="none" stroke="#e0e0e0" stroke-width="1"><circle cx="5.6" cy="2.1" r="1.6"/><path d="M1 4.6 C3 5.6 8.2 5.6 10.2 4.6 M3.6 5.4 V8 L1.8 12.2 M7.6 5.4 V7.2 M3.6 8 L5.6 7 L6.6 8"/><path d="M7.6 8 L11.8 12.2 M11.8 8 L7.6 12.2" stroke-width="1.1"/></svg>
<div class="t" style="left:89.00px;top:507.30px;font-size:9.40px;color:#f2f2f2;font-weight:bold;transform:scaleX(0.9167);">Accessibility: Investigate</div>
<svg class="abs" style="left:475px;top:506px" width="11" height="10" viewBox="0 0 12 11" fill="none" stroke="#747474" stroke-width="1.1"><rect x="0.5" y="0.5" width="11" height="10"/><path d="M0.5 3.8 H11.5 M0.5 7.1 H11.5 M4.2 0.5 V10.5 M7.8 0.5 V10.5"/></svg>
<svg class="abs" style="left:508px;top:506px" width="11" height="10" viewBox="0 0 12 11" fill="none" stroke="#747474" stroke-width="1.1"><rect x="0.5" y="0.5" width="11" height="10"/><rect x="3" y="2.8" width="6" height="5.4"/><path d="M4.5 4.6 H7.5 M4.5 6.4 H7.5" stroke-width="0.7"/></svg>
<svg class="abs" style="left:541px;top:506px" width="11" height="10" viewBox="0 0 12 11" fill="none" stroke="#747474" stroke-width="1.1"><rect x="0.5" y="0.5" width="11" height="10"/><path d="M4 0.5 V6 M0.5 6 H7.5 V0.5"/></svg>
<div class="abs" style="left:568px;top:510.8px;width:5.5px;height:1px;background:#626262"></div>
<div class="abs" style="left:578px;top:510.7px;width:81px;height:1.1px;background:#d2d2d2"></div>
<div class="abs" style="left:618px;top:508.2px;width:1.2px;height:6px;background:#e0e0e0"></div>
<svg class="abs" style="left:664px;top:508.3px" width="6" height="6" viewBox="0 0 6 6" stroke="#666" stroke-width="0.85"><path d="M3 0 V6 M0 3 H6"/></svg>
<div class="t" style="left:681.00px;top:507.60px;font-size:8.80px;color:#606060;transform:scaleX(0.9333);">100%</div><div class="abs" style="left:0;top:1px;width:717.2px;height:519.6px;border:1px solid #5a5a5a;border-top-color:#7c7a7b;border-left-color:#4a4547;border-right:1.3px solid #6a6a6a;border-radius:5px 6px 6px 6px;pointer-events:none"></div>


</body>
</html>
